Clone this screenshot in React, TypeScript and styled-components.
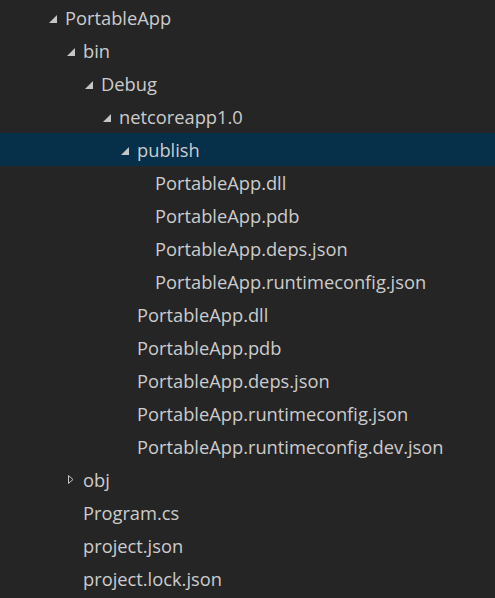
import React from "react";
import styled, { createGlobalStyle } from "styled-components";

const Global = createGlobalStyle`
  html, body { margin: 0; padding: 0; background: #252526; }
  body { width: 495px; height: 598px; overflow: hidden; }
`;

const Tree = styled.div`
  display: flex;
  flex-direction: column;
  padding-top: 1px;
  background: #252526;
  width: 495px;
  height: 598px;
  font-family: "Open Sans", "Noto Sans", sans-serif;
  font-size: 18.3px;
  color: #cccccc;
`;

const Row = styled.div<{ $level: number; $selected?: boolean }>`
  display: flex;
  align-items: center;
  height: 33px;
  padding-left: ${(p) => 47 + p.$level * 18}px;
  background: ${(p) => (p.$selected ? "#062f4a" : "transparent")};
  white-space: nowrap;
`;

const Twistie = styled.span`
  display: flex;
  align-items: center;
  justify-content: center;
  width: 18px;
  height: 33px;
  flex: none;
`;

const Label = styled.span`
  line-height: 33px;
`;

type Node = { name: string; level: number; kind: "open" | "closed" | "file"; selected?: boolean };

const nodes: Node[] = [
  { name: "PortableApp", level: 0, kind: "open" },
  { name: "bin", level: 1, kind: "open" },
  { name: "Debug", level: 2, kind: "open" },
  { name: "netcoreapp1.0", level: 3, kind: "open" },
  { name: "publish", level: 4, kind: "open", selected: true },
  { name: "PortableApp.dll", level: 5, kind: "file" },
  { name: "PortableApp.pdb", level: 5, kind: "file" },
  { name: "PortableApp.deps.json", level: 5, kind: "file" },
  { name: "PortableApp.runtimeconfig.json", level: 5, kind: "file" },
  { name: "PortableApp.dll", level: 4, kind: "file" },
  { name: "PortableApp.pdb", level: 4, kind: "file" },
  { name: "PortableApp.deps.json", level: 4, kind: "file" },
  { name: "PortableApp.runtimeconfig.json", level: 4, kind: "file" },
  { name: "PortableApp.runtimeconfig.dev.json", level: 4, kind: "file" },
  { name: "obj", level: 1, kind: "closed" },
  { name: "Program.cs", level: 1, kind: "file" },
  { name: "project.json", level: 1, kind: "file" },
  { name: "project.lock.json", level: 1, kind: "file" },
];

const OpenArrow = () => (
  <svg width="18" height="33" viewBox="0 0 18 33">
    <polygon points="10,14 10,22 2,22" fill="#c5c5c5" />
  </svg>
);

const ClosedArrow = () => (
  <svg width="18" height="33" viewBox="0 0 18 33">
    <polygon points="3.5,12.5 3.5,20.5 8,16.5" fill="none" stroke="#c5c5c5" strokeWidth="1" />
  </svg>
);

export default function App() {
  return (
    <>
      <Global />
      <Tree>
        {nodes.map((n, i) => (
          <Row key={i} $level={n.level} $selected={n.selected}>
            <Twistie>
              {n.kind === "open" && <OpenArrow />}
              {n.kind === "closed" && <ClosedArrow />}
            </Twistie>
            <Label>{n.name}</Label>
          </Row>
        ))}
      </Tree>
    </>
  );
}
